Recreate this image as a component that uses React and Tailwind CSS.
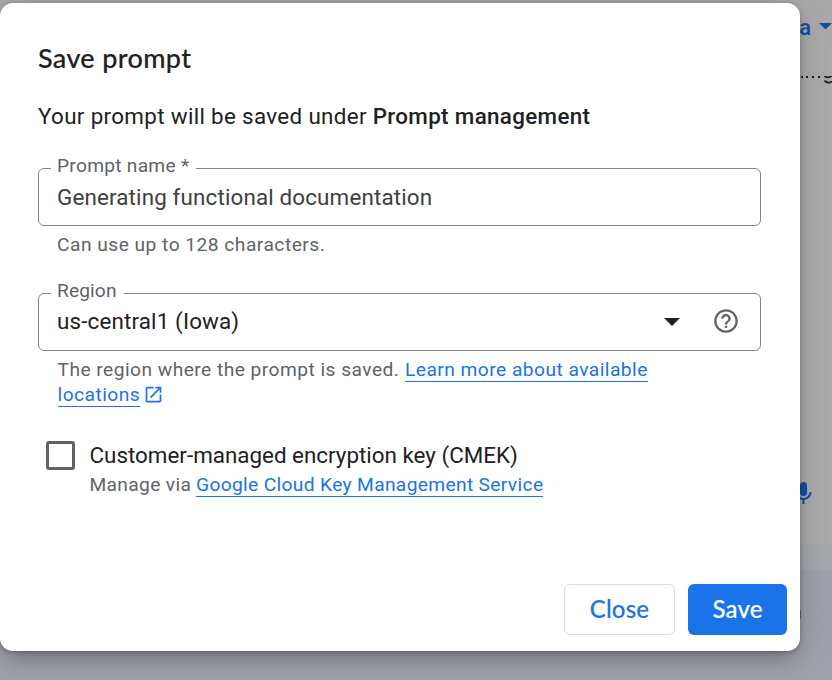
import React from "react";

function Backdrop() {
  return (
    <div className="flex h-full flex-col bg-[#ababab]">
      <div className="flex h-[76px] items-start justify-end pt-[14px]">
        <span className="font-['Roboto'] text-[22px] leading-[28px] font-medium text-[#124fa0]">a</span>
        <svg className="mt-[9px] ml-[8px]" width="13" height="7" viewBox="0 0 13 7">
          <path d="M0 0h13L6.5 6.5z" fill="#124fa0" />
        </svg>
      </div>
      <div className="flex h-[10px] justify-end">
        <svg width="32" height="10" viewBox="0 0 32 10">
          <path d="M1 0h2v2H1zM6 0h2v2H6zM12 0h2v2h-2zM18 0h2v2h-2z" fill="#202124" />
          <path d="M24.5 0C25.5 1.6 29 1.8 32 0M24.5 4.5C26 7 30 7 32 5.5" fill="none" stroke="#202124" strokeWidth="1.8" />
        </svg>
      </div>
      <div className="flex grow items-end justify-end pr-[20px] pb-[39px]">
        <svg width="18" height="24" viewBox="0 0 18 24">
          <rect x="6" y="1" width="7" height="14" rx="3.5" fill="#174ea6" />
          <path d="M2.4 11a7.1 7.1 0 0 0 14.2 0M9.5 18v5" fill="none" stroke="#174ea6" strokeWidth="2" />
        </svg>
      </div>
      <div className="h-[26px] bg-[#a6a7ac]" />
      <div className="flex h-[110px] justify-end bg-[#9fa2ab] pt-[40px] pr-[31px]">
        <div className="h-[9px] w-[2px] bg-[#65676b]" />
      </div>
    </div>
  );
}

function Field({ label, labelClass, children }) {
  return (
    <fieldset className="h-[70px] w-[723px] rounded-[6px] border border-[#80868b] pl-[12px]">
      <legend className={`h-[24px] pl-[6px] text-[19.2px] leading-[20px] whitespace-nowrap text-[#5f6368] ${labelClass}`}>
        {label}
      </legend>
      <div className="flex h-[34px] items-center pl-[6px]">{children}</div>
    </fieldset>
  );
}

function DocLink({ children }) {
  return (
    <a className="inline-block h-[24px] border-b border-[#1a73e8] leading-[24px] text-[#1a73e8]">
      {children}
    </a>
  );
}

export default function App() {
  return (
    <main className="relative h-[680px] w-[832px] overflow-hidden font-['Roboto',sans-serif] text-[#202124]">
      <Backdrop />
      <section className="absolute top-[3px] left-0 flex h-[648px] w-[800px] flex-col rounded-[13px] bg-white pl-[38px] whitespace-nowrap shadow-[0_14px_20px_-8px_rgba(0,0,0,0.22),0_4px_36px_4px_rgba(0,0,0,0.13),0_1px_5px_rgba(0,0,0,0.25)]">
        <h1 className="mt-[39px] h-[32px] font-['Lato'] text-[27px] leading-[32px] font-medium tracking-[0.35px] [-webkit-text-stroke:0.15px_#202124]">Save prompt</h1>
        <p className="mt-[28px] h-[28px] text-[22.4px] leading-[28px] tracking-[0.33px]">
          Your prompt will be saved under <span className="font-medium">Prompt management</span>
        </p>
        <div className="mt-[26px]">
          <Field label="Prompt name *" labelClass="w-[145px] tracking-[0.26px]">
            <span className="text-[22.4px] leading-[30px] tracking-[0.15px] text-[#3c4043]">Generating functional documentation</span>
          </Field>
        </div>
        <p className="mt-[7px] h-[24px] pl-[19px] text-[19.2px] leading-[24px] tracking-[0.48px] text-[#5f6368]">
          Can use up to 128 characters.
        </p>
        <div className="mt-[24px]">
          <Field label="Region" labelClass="w-[73px] tracking-[0.1px]">
            <span className="-mt-[2px] w-[607px] text-[22.4px] leading-[30px] tracking-[0.15px]">us-central1 (Iowa)</span>
            <svg width="16" height="8" viewBox="0 0 16 8">
              <path d="M0 0h16L8 8z" fill="#202124" />
            </svg>
            <svg className="-mt-[2px] ml-[33px]" width="26" height="26" viewBox="1 1 22 22">
              <path d="M11 18h2v-2h-2v2zm1-16C6.48 2 2 6.48 2 12s4.48 10 10 10 10-4.48 10-10S17.52 2 12 2zm0 18c-4.41 0-8-3.59-8-8s3.59-8 8-8 8 3.59 8 8-3.59 8-8 8zm0-14c-2.21 0-4 1.79-4 4h2c0-1.1.9-2 2-2s2 .9 2 2c0 2-3 1.75-3 5h2c0-2.25 3-2.5 3-5 0-2.21-1.79-4-4-4z" fill="#5f6368" />
            </svg>
          </Field>
        </div>
        <div className="mt-[7px] pl-[19.5px] text-[19.2px] tracking-[0.46px] text-[#5f6368]">
          <p className="flex h-[25px]">
            <span className="w-[347.5px] leading-[24px]">The region where the prompt is saved.</span>
            <DocLink>Learn more about available</DocLink>
          </p>
          <p className="flex h-[25px]">
            <DocLink>locations</DocLink>
            <svg className="mt-[1px] ml-[3px]" width="21" height="21" viewBox="0 0 24 24">
              <path d="M19 19H5V5h7V3H5a2 2 0 0 0-2 2v14a2 2 0 0 0 2 2h14c1.1 0 2-.9 2-2v-7h-2v7zM14 3v2h3.59l-9.83 9.83 1.41 1.41L19 6.41V10h2V3h-7z" fill="#1a73e8" />
            </svg>
          </p>
        </div>
        <div className="mt-[33px] flex pl-[8px]">
          <span className="size-[29px] rounded-[3px] border-3 border-[#5f6368]" />
          <div className="ml-[14.5px]">
            <p className="h-[32px] text-[22.4px] leading-[29px]">Customer-managed encryption key (CMEK)</p>
            <p className="flex h-[25px] text-[19.2px] leading-[24px] tracking-[0.34px] text-[#5f6368]">
              <span className="w-[106.5px]">Manage via</span>
              <DocLink>Google Cloud Key Management Service</DocLink>
            </p>
          </div>
        </div>
        <footer className="mt-auto mr-[13px] mb-[16px] flex justify-end gap-[13px] font-['Lato'] text-[24px] font-medium tracking-[0.2px]">
          <button className="h-[51px] w-[111px] rounded-[6px] border border-[#dadce0] pb-[2px] text-[#1a73e8] [-webkit-text-stroke:0.15px_#1a73e8]">Close</button>
          <button className="h-[51px] w-[99px] rounded-[6px] bg-[#1a73e8] pb-[2px] text-white [-webkit-text-stroke:0.15px_#ffffff]">Save</button>
        </footer>
      </section>
    </main>
  );
}
